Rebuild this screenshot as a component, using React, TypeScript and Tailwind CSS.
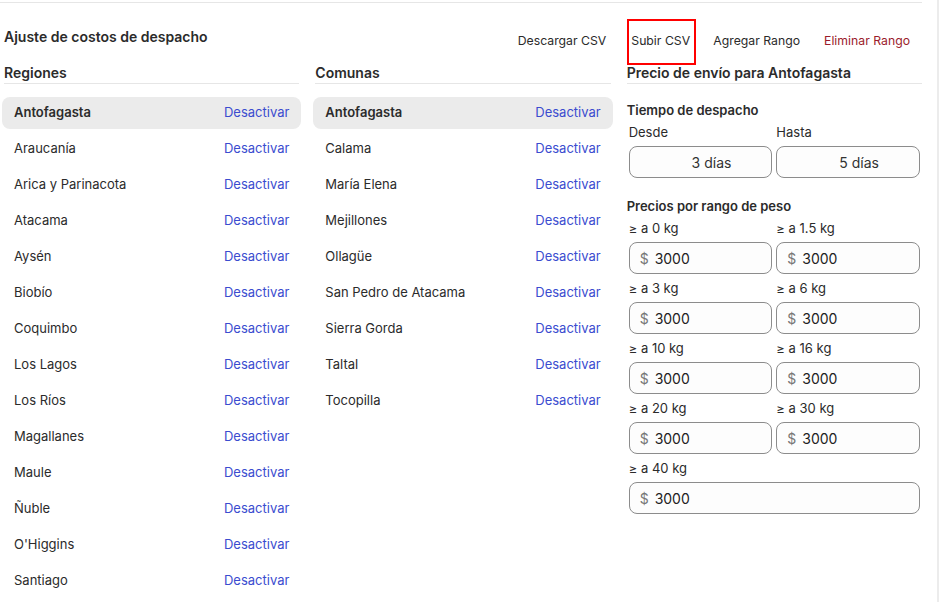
import React from "react";

const regiones = [
  "Antofagasta",
  "Araucanía",
  "Arica y Parinacota",
  "Atacama",
  "Aysén",
  "Biobío",
  "Coquimbo",
  "Los Lagos",
  "Los Ríos",
  "Magallanes",
  "Maule",
  "Ñuble",
  "O'Higgins",
  "Santiago",
];

const comunas = [
  "Antofagasta",
  "Calama",
  "María Elena",
  "Mejillones",
  "Ollagüe",
  "San Pedro de Atacama",
  "Sierra Gorda",
  "Taltal",
  "Tocopilla",
];

const rangos = ["0", "1.5", "3", "6", "10", "16", "20", "30", "40"];

function ListItem({ name, active }: { name: string; active?: boolean }) {
  return (
    <div
      className={
        "flex h-8 items-center justify-between rounded-lg px-3 text-[13px] " +
        (active ? "bg-[#ebebeb] font-semibold text-[#2b2b2b]" : "text-[#2b2b2b]")
      }
    >
      <span>{name}</span>
      <button className="font-normal text-[#3b4ccf]">Desactivar</button>
    </div>
  );
}

function PriceInput() {
  return (
    <div className="flex h-8 items-center rounded-lg border border-[#8c8c8c] bg-[#fdfdfd] pl-[10px] text-[14px]">
      <span className="text-[#777]">$</span>
      <span className="ml-[6px] text-[#222]">3000</span>
    </div>
  );
}

export default function App() {
  return (
    <div
      className="relative flex h-[602px] w-[939px] overflow-hidden bg-white text-[#2b2b2b]"
      style={{ fontFamily: "Inter, 'Noto Sans', sans-serif" }}
    >
      <div className="flex-1 pt-[2px]">
        <div className="w-[922px] border-t border-[#e6e6e6]">
          <div className="pl-[4px]">
            {/* Header */}
            <div className="mt-4 flex h-[46px] items-center justify-between">
              <h1 className="self-start pt-2 text-[14px] font-semibold leading-5 text-[#2b2b2b]">
                Ajuste de costos de despacho
              </h1>
              <div className="flex items-center text-[12.25px] text-[#2b2b2b]">
                <button className="px-3 pb-[2px] leading-5">Descargar CSV</button>
                <div className="ml-[9px] flex h-[46px] w-[69px] items-center border-2 border-[#ff0000] pb-[2px] pl-[2px]">
                  <button className="leading-5">Subir CSV</button>
                </div>
                <button className="ml-[5px] px-3 pb-[2px] leading-5">Agregar Rango</button>
                <button className="px-3 pb-[2px] leading-5 text-[#9b1c2c]">Eliminar Rango</button>
              </div>
            </div>

            {/* Columns */}
            <div className="grid grid-cols-3 gap-4">
              {/* Regiones */}
              <div>
                <h2 className="border-b border-[#e6e6e6] pb-[2px] text-[14px] font-semibold leading-4">
                  Regiones
                </h2>
                <div className="-mx-[2px] mt-[13px] flex flex-col gap-1">
                  {regiones.map((r, i) => (
                    <ListItem key={r} name={r} active={i === 0} />
                  ))}
                </div>
              </div>

              {/* Comunas */}
              <div>
                <h2 className="border-b border-[#e6e6e6] pb-[2px] text-[14px] font-semibold leading-4">
                  Comunas
                </h2>
                <div className="-mx-[2px] mt-[13px] flex flex-col gap-1">
                  {comunas.map((c, i) => (
                    <ListItem key={c} name={c} active={i === 0} />
                  ))}
                </div>
              </div>

              {/* Precio */}
              <div>
                <h2 className="border-b border-[#e6e6e6] pb-[2px] text-[14px] font-semibold leading-4">
                  Precio de envío para Antofagasta
                </h2>
                <h3 className="mt-4 text-[13px] font-semibold leading-5">Tiempo de despacho</h3>
                <div className="mt-1 grid grid-cols-2 gap-x-1 px-[2px]">
                  <div>
                    <div className="text-[13px] leading-4">Desde</div>
                    <div className="mt-[6px] flex h-8 items-center justify-center rounded-lg border border-[#8c8c8c] bg-[#fdfdfd] pl-[22px] text-[14px] text-[#333]">
                      3 días
                    </div>
                  </div>
                  <div>
                    <div className="text-[13px] leading-4">Hasta</div>
                    <div className="mt-[6px] flex h-8 items-center justify-center rounded-lg border border-[#8c8c8c] bg-[#fdfdfd] pl-[22px] text-[14px] text-[#333]">
                      5 días
                    </div>
                  </div>
                </div>

                <h3 className="mt-[18px] text-[13px] font-semibold leading-5">
                  Precios por rango de peso
                </h3>
                <div className="mt-1 grid grid-cols-2 gap-x-1 gap-y-[6px] px-[2px]">
                  {rangos.map((r, i) => (
                    <div key={r} className={i === rangos.length - 1 ? "col-span-2" : ""}>
                      <div className="text-[13px] leading-4">≥ a {r} kg</div>
                      <div className="mt-[6px]">
                        <PriceInput />
                      </div>
                    </div>
                  ))}
                </div>
              </div>
            </div>
          </div>
        </div>
      </div>
      <div className="w-[2px] shrink-0 bg-[#ececec]" />
    </div>
  );
}
